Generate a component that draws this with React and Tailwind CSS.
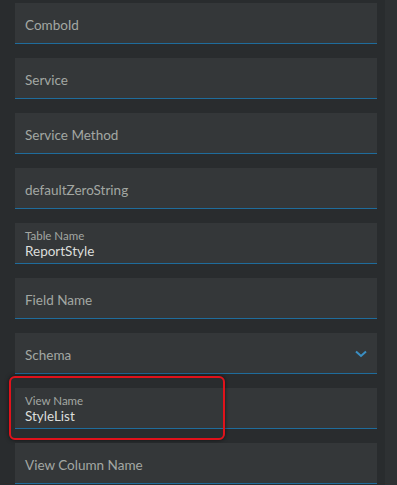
import React from "react";

const fields = [
  { label: "ComboId" },
  { label: "Service" },
  { label: "Service Method" },
  { label: "defaultZeroString" },
  { label: "Table Name", value: "ReportStyle" },
  { label: "Field Name" },
  { label: "Schema", select: true },
  { label: "View Name", value: "StyleList", highlight: true },
  { label: "View Column Name" },
];

function Field({ label, value, select, highlight }) {
  return (
    <div className="relative">
      {highlight && (
        <div className="absolute left-[-6px] top-[-12px] w-[216px] h-[64px] rounded-[6px] border-2 border-[#e0121b] shadow-[0_0_4px_rgba(0,0,0,0.6)] pointer-events-none" />
      )}
      <div className="h-[41px] bg-[#343739] border-b border-[#1f6c9c] flex items-center pl-[10px] pr-[10px]">
        {value ? (
          <div className="flex flex-col pt-[3px]">
            <span className="text-[11.5px] leading-[13px] text-[#a3a7a3]">{label}</span>
            <span className="text-[13.5px] leading-[18px] text-[#dcdedc]">{value}</span>
          </div>
        ) : (
          <span className="text-[13.5px] leading-[18px] text-[#a3a7a3] pt-[4px] flex-1">{label}</span>
        )}
        {select && (
          <svg width="12" height="8" viewBox="0 0 12 8" className="mt-[1px]">
            <path d="M1 1.5 L6 6 L11 1.5" fill="none" stroke="#3a8fc4" strokeWidth="2" />
          </svg>
        )}
      </div>
    </div>
  );
}

export default function App() {
  return (
    <div
      className="w-[397px] h-[485px] overflow-hidden bg-[#292c2e] flex"
      style={{ fontFamily: '"Lato", "Noto Sans", sans-serif' }}
    >
      <div className="w-[385px] pl-[15px] pr-[8px] pt-[3px] flex flex-col gap-[14px]">
        {fields.map((f) => (
          <Field key={f.label} {...f} />
        ))}
      </div>
      <div className="flex-1 bg-[#2e3133]" />
    </div>
  );
}
